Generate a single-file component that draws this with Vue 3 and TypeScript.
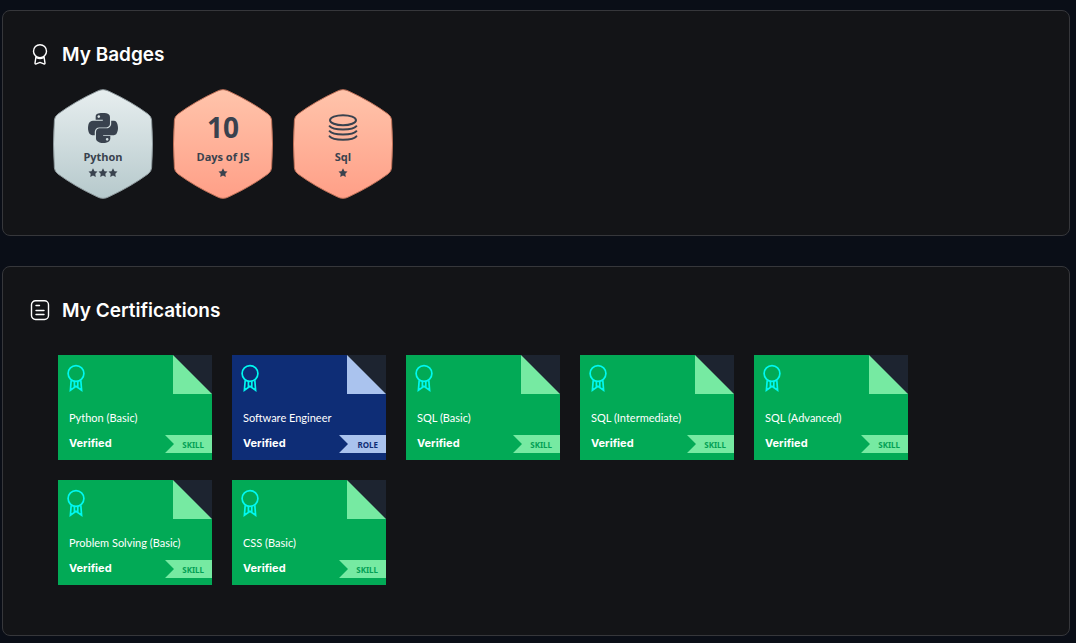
<script setup lang="ts">
interface Badge {
  name: string
  stars: number
  tone: 'silver' | 'bronze'
  art: 'python' | 'ten' | 'sql'
}

interface Certificate {
  name: string
  kind: 'Skill' | 'Role'
}

const badges: Badge[] = [
  { name: 'Python', stars: 3, tone: 'silver', art: 'python' },
  { name: 'Days of JS', stars: 1, tone: 'bronze', art: 'ten' },
  { name: 'Sql', stars: 1, tone: 'bronze', art: 'sql' },
]

const certificates: Certificate[] = [
  { name: 'Python (Basic)', kind: 'Skill' },
  { name: 'Software Engineer', kind: 'Role' },
  { name: 'SQL (Basic)', kind: 'Skill' },
  { name: 'SQL (Intermediate)', kind: 'Skill' },
  { name: 'SQL (Advanced)', kind: 'Skill' },
  { name: 'Problem Solving (Basic)', kind: 'Skill' },
  { name: 'CSS (Basic)', kind: 'Skill' },
]
</script>

<template>
  <main class="page">
    <section class="panel" aria-labelledby="badges-title">
      <header class="panel-head">
        <svg class="head-icon" viewBox="0 1 20 22" aria-hidden="true">
          <circle cx="10" cy="8.2" r="6.5" />
          <path d="M6 13.6L5 20.2Q5 21.3 6.2 20.8L10 19.4L13.8 20.8Q15 21.3 15 20.2L14 13.6" />
          <path d="M6.4 14.6Q10 16.6 13.6 14.6" />
        </svg>
        <h2 id="badges-title">My Badges</h2>
      </header>
      <ul class="badges">
        <li v-for="badge in badges" :key="badge.name" class="badge">
          <svg class="hexagon" viewBox="0 0 100 110" aria-hidden="true">
            <defs>
              <linearGradient :id="'fill-' + badge.art" x1="0" y1="0" x2="0" y2="1">
                <stop offset="0" :class="badge.tone + '-top'" />
                <stop offset="1" :class="badge.tone + '-bottom'" />
              </linearGradient>
            </defs>
            <path
              :class="badge.tone + '-edge'"
              :fill="'url(#fill-' + badge.art + ')'"
              d="M44 2.3Q50 -1 56 2.3Q78 12.5 95 25Q98.3 27.5 98.6 31Q100.4 55 98.6 79Q98.3 82.5 95 85Q78 97.5 56 107.7Q50 111 44 107.7Q22 97.5 5 85Q1.7 82.5 1.4 79Q-0.4 55 1.4 31Q1.7 27.5 5 25Q22 12.5 44 2.3Z"
            />
          </svg>
          <div class="badge-body">
            <svg v-if="badge.art === 'python'" class="art python" viewBox="0 32 448 448" aria-hidden="true">
              <path d="M439.8 200.5c-7.7-30.9-22.3-54.2-53.4-54.2h-40.1v47.4c0 36.8-31.2 67.8-66.8 67.8H172.7c-29.2 0-53.4 25-53.4 54.3v101.8c0 29 25.2 46 53.4 54.3 33.8 9.9 66.3 11.7 106.8 0 26.9-7.8 53.4-23.5 53.4-54.3v-40.7H226.2v-13.6h160.2c31.1 0 42.6-21.7 53.4-54.2 11.2-33.5 10.7-65.7 0-108.6zM286.2 404c11.1 0 20.1 9.1 20.1 20.3 0 11.3-9 20.4-20.1 20.4-11 0-20.1-9.2-20.1-20.4.1-11.3 9.1-20.3 20.1-20.3zM167.8 248.1h106.8c29.7 0 53.4-24.5 53.4-54.3V91.9c0-29-24.4-50.7-53.4-55.6-35.8-5.9-74.7-5.6-106.8.1-45.2 8-53.4 24.7-53.4 55.6v40.7h106.9v13.6h-147c-31.1 0-58.3 18.7-66.8 54.2-9.8 40.7-10.2 66.1 0 108.6 7.6 31.6 25.7 54.2 56.8 54.2H101v-48.8c0-35.3 30.5-66.4 66.8-66.4zm-6.7-142.6c-11.1 0-20.1-9.1-20.1-20.3.1-11.3 9-20.4 20.1-20.4 11 0 20.1 9.2 20.1 20.4s-9 20.3-20.1 20.3z" />
            </svg>
            <svg v-else-if="badge.art === 'sql'" class="art sql" viewBox="0 0 30 30" aria-hidden="true">
              <ellipse cx="15" cy="7.2" rx="13" ry="5" />
              <path d="M1.6 13.2C5 17.6 25 17.6 28.4 13.2M1.6 18.2C5 22.6 25 22.6 28.4 18.2M1.6 23.4C5 27.8 25 27.8 28.4 23.4" />
            </svg>
            <span v-else class="art number">10</span>
            <span class="badge-name">{{ badge.name }}</span>
            <span class="stars" role="img" :aria-label="badge.stars + ' stars'">
              <svg v-for="n in badge.stars" :key="n" viewBox="0 0 10 10" aria-hidden="true">
                <path d="M5 .3L6.5 3.2L9.5 3.6L7.3 5.8L7.8 9L5 7.5L2.2 9L2.7 5.8L.5 3.6L3.5 3.2Z" />
              </svg>
            </span>
          </div>
        </li>
      </ul>
    </section>

    <section class="panel" aria-labelledby="certs-title">
      <header class="panel-head">
        <svg class="head-icon" viewBox="0 1 20 22" aria-hidden="true">
          <rect x="1.5" y="1.8" width="17" height="18.7" rx="4" />
          <path d="M6 6.5H9.5M6 11.5H14M6 15.5H14" />
        </svg>
        <h2 id="certs-title">My Certifications</h2>
      </header>
      <ul class="certs">
        <li v-for="cert in certificates" :key="cert.name">
          <a href="#" class="cert" :class="cert.kind.toLowerCase()">
            <span class="fold"></span>
            <svg class="rosette" viewBox="0 0 18 28" aria-hidden="true">
              <circle cx="9" cy="9.5" r="7.9" />
              <path d="M4.2 16.2L3.4 26.2L9 22.4L14.6 26.2L13.8 16.2M7.4 17.2V23M10.8 17.2V23" />
            </svg>
            <span class="cert-name">{{ cert.name }}</span>
            <span class="cert-foot">
              <strong>Verified</strong>
              <span class="ribbon">{{ cert.kind.toUpperCase() }}</span>
            </span>
          </a>
        </li>
      </ul>
    </section>
  </main>
</template>

<style>
body {
  margin: 0;
  background: #0a0e17;
}
</style>

<style scoped>
.page {
  display: flex;
  flex-direction: column;
  gap: 30px;
  padding: 10px 6px 7px 2px;
  font-family: Inter, "Liberation Sans", sans-serif;
  color: #fff;
}

.panel {
  padding: 29px 27px 50px;
  background: #131417;
  border: 1px solid #36373b;
  border-radius: 8px;
}

.panel:first-child {
  padding-bottom: 36px;
}

.panel-head {
  display: flex;
  align-items: center;
  gap: 12px;
  height: 30px;
}

.head-icon {
  width: 20px;
  height: 22px;
  fill: none;
  stroke: #fff;
  stroke-width: 1.4;
  stroke-linecap: round;
  stroke-linejoin: round;
}

h2 {
  margin: 0;
  font-size: 19px;
  font-weight: 600;
  line-height: 30px;
}

ul {
  display: flex;
  flex-wrap: wrap;
  gap: 20px;
  margin: 0;
  list-style: none;
}

.badges {
  padding: 19px 0 0 23px;
}

.badge {
  display: grid;
  width: 100px;
  height: 110px;
}

.hexagon,
.badge-body {
  grid-area: 1 / 1;
}

.hexagon {
  width: 100px;
  height: 110px;
}

.silver-top { stop-color: #e7eeef; }
.silver-bottom { stop-color: #b6c9cc; }
.bronze-top { stop-color: #ffc4ab; }
.bronze-bottom { stop-color: #ff9f87; }
.silver-edge { stroke: #8d989c; }
.bronze-edge { stroke: #bd7058; }

.badge-body {
  z-index: 1;
  display: flex;
  flex-direction: column;
  align-items: center;
  padding-top: 24px;
  font-family: "Open Sans", sans-serif;
  color: #39424e;
}

.art {
  width: 30px;
  height: 30px;
}

.python {
  fill: #39424e;
}

.sql {
  fill: none;
  stroke: #39424e;
  stroke-width: 2;
  stroke-linecap: round;
}

.number {
  display: flex;
  justify-content: center;
  font-size: 28px;
  font-weight: 700;
  line-height: 28px;
}

.badge-name {
  margin-top: 6px;
  font-size: 11px;
  font-weight: 700;
  line-height: 16px;
}

.stars {
  display: flex;
  margin-top: 3px;
}

.stars svg {
  width: 10px;
  height: 10px;
  fill: #39424e;
}

.certs {
  padding: 29px 0 0 28px;
}

.cert {
  position: relative;
  display: flex;
  flex-direction: column;
  box-sizing: border-box;
  width: 154px;
  height: 105px;
  padding: 9px 0 7px;
  color: #fff;
  text-decoration: none;
}

.skill {
  --base: #02aa56;
  --light: #76eaa2;
  --label: #02a054;
  background: var(--base);
}

.role {
  --base: #0e2d76;
  --light: #aac3ee;
  --label: #0e2d76;
  background: var(--base);
}

.fold {
  position: absolute;
  top: 0;
  right: 0;
  width: 39px;
  height: 39px;
  background: #1d2430;
}

.fold::before {
  content: "";
  display: block;
  height: 100%;
  background: var(--light);
  clip-path: polygon(0 0, 100% 100%, 0 100%);
}

.rosette {
  width: 18px;
  height: 28px;
  margin-left: 9px;
  fill: none;
  stroke: #00f8f0;
  stroke-width: 1.7;
}

.cert-name {
  margin: auto 0 8px 11px;
  font-family: Lato, sans-serif;
  font-size: 11px;
  line-height: 18px;
  white-space: nowrap;
}

.cert-foot {
  display: flex;
  justify-content: space-between;
  padding-left: 11px;
  font-size: 11px;
  line-height: 18px;
}

.cert-foot strong {
  line-height: 16px;
}

.ribbon {
  box-sizing: border-box;
  width: 47px;
  height: 18px;
  padding-right: 8px;
  background: var(--light);
  clip-path: polygon(0 0, 100% 0, 100% 100%, 0 100%, 9px 50%);
  color: var(--label);
  font-family: "Noto Sans", "Open Sans", sans-serif;
  font-size: 8px;
  font-weight: 700;
  line-height: 20px;
  text-align: right;
}
</style>
